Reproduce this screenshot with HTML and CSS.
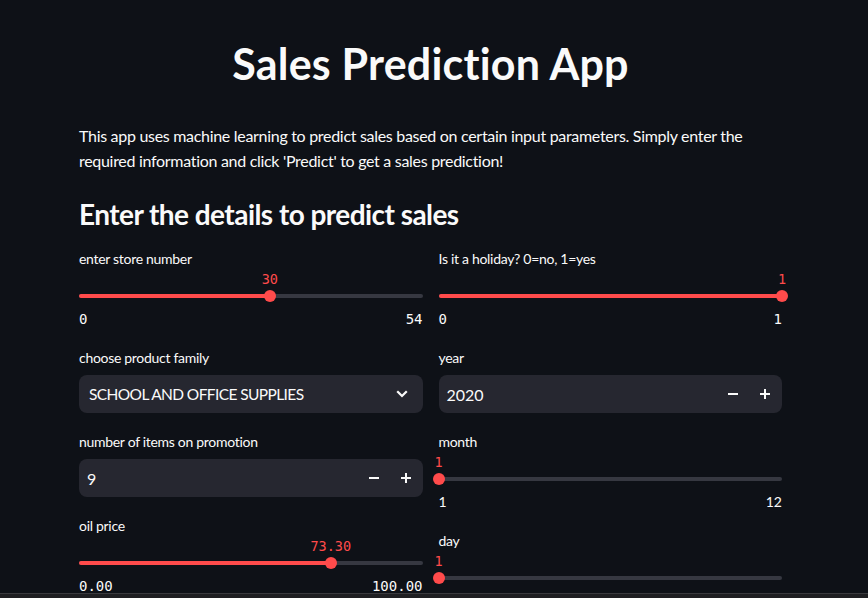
FILE: index.html
```html
<!DOCTYPE html>
<html>
<head>
<meta charset="utf-8">
<link rel="stylesheet" href="styles.css">
</head>
<body>
<div class="page">
  <h1 class="title">Sales Prediction App</h1>
  <p class="intro">This app uses machine learning to predict sales based on certain input parameters. Simply enter the required information and click 'Predict' to get a sales prediction!</p>
  <h2 class="subtitle">Enter the details to predict sales</h2>
  <div class="cols">
    <div class="col">
      <div class="widget slider">
        <div class="label">enter store number</div>
        <div class="track-wrap">
          <div class="track">
            <div class="fill" style="width:55.56%"></div>
            <div class="thumb" style="left:55.56%"><span class="val">30</span></div>
          </div>
        </div>
        <div class="minmax"><span>0</span><span>54</span></div>
      </div>
      <div class="widget">
        <div class="label">choose product family</div>
        <div class="box select">
          <span class="box-text caps">SCHOOL AND OFFICE SUPPLIES</span>
          <svg class="chev" width="14" height="14" viewBox="0 0 14 14"><path d="M3 5 L7 9 L11 5" fill="none" stroke="#fafafa" stroke-width="2.2" stroke-linecap="square"/></svg>
        </div>
      </div>
      <div class="widget">
        <div class="label">number of items on promotion</div>
        <div class="box number">
          <span class="box-text num-text">9</span>
          <span class="step"><svg width="12" height="12" viewBox="0 0 12 12"><path d="M1 6 H11" stroke="#fafafa" stroke-width="2"/></svg></span>
          <span class="step"><svg width="12" height="12" viewBox="0 0 12 12"><path d="M1 6 H11 M6 1 V11" stroke="#fafafa" stroke-width="2"/></svg></span>
        </div>
      </div>
      <div class="widget slider">
        <div class="label">oil price</div>
        <div class="track-wrap">
          <div class="track">
            <div class="fill" style="width:73.3%"></div>
            <div class="thumb" style="left:73.3%"><span class="val">73.30</span></div>
          </div>
        </div>
        <div class="minmax"><span>0.00</span><span>100.00</span></div>
      </div>
    </div>
    <div class="col">
      <div class="widget slider">
        <div class="label">Is it a holiday? 0=no, 1=yes</div>
        <div class="track-wrap">
          <div class="track">
            <div class="fill" style="width:100%"></div>
            <div class="thumb" style="left:100%"><span class="val">1</span></div>
          </div>
        </div>
        <div class="minmax"><span>0</span><span>1</span></div>
      </div>
      <div class="widget">
        <div class="label">year</div>
        <div class="box number">
          <span class="box-text num-text">2020</span>
          <span class="step"><svg width="12" height="12" viewBox="0 0 12 12"><path d="M1 6 H11" stroke="#fafafa" stroke-width="2"/></svg></span>
          <span class="step"><svg width="12" height="12" viewBox="0 0 12 12"><path d="M1 6 H11 M6 1 V11" stroke="#fafafa" stroke-width="2"/></svg></span>
        </div>
      </div>
      <div class="widget slider">
        <div class="label">month</div>
        <div class="track-wrap">
          <div class="track">
            <div class="fill" style="width:0%"></div>
            <div class="thumb" style="left:0%"><span class="val">1</span></div>
          </div>
        </div>
        <div class="minmax sans"><span>1</span><span>12</span></div>
      </div>
      <div class="widget slider day">
        <div class="label">day</div>
        <div class="track-wrap">
          <div class="track">
            <div class="fill" style="width:0%"></div>
            <div class="thumb" style="left:0%"><span class="val">1</span></div>
          </div>
        </div>
      </div>
    </div>
  </div>
</div>
<div class="bottom-bar"></div>
</body>
</html>
```

FILE: styles.css
```css
* { box-sizing: border-box; }
html, body {
  margin: 0;
  padding: 0;
  background: #0e1117;
  color: #fafafa;
  font-family: "Lato", "Noto Sans", sans-serif;
  overflow: hidden;
  height: 598px;
}
.page {
  width: 703px;
  margin-left: 79px;
  padding-top: 40px;
  display: flex;
  flex-direction: column;
}
.title {
  margin: 0;
  font-size: 43px;
  line-height: 48px;
  font-weight: 700;
  text-align: center;
  letter-spacing: 0.2px;
}
.intro {
  margin: 35px 0 0 0;
  font-size: 16px;
  line-height: 25px;
  letter-spacing: -0.3px;
}
.subtitle {
  margin: 24px 0 0 0;
  font-size: 28px;
  line-height: 34px;
  font-weight: 700;
  letter-spacing: -0.55px;
}
.cols {
  margin-top: 18px;
  display: flex;
  gap: 16px;
}
.col {
  flex: 1 1 0;
  display: flex;
  flex-direction: column;
  gap: 19px;
}
.widget {
  display: flex;
  flex-direction: column;
}
.label {
  font-size: 14px;
  line-height: 20px;
  height: 20px;
  letter-spacing: -0.3px;
}
.box {
  margin-top: 7px;
  height: 38px;
  background: #262730;
  border-radius: 8px;
  display: flex;
  align-items: center;
}
.box-text {
  flex: 1;
  font-size: 16px;
  padding-left: 10px;
}
.caps {
  font-size: 15.5px;
  letter-spacing: -0.6px;
}
.num-text { padding-left: 8px; }
.chev { margin-right: 14px; }
.step {
  width: 32px;
  height: 38px;
  display: flex;
  align-items: center;
  justify-content: center;
}
.step:last-child { margin-right: 1px; }
.track-wrap {
  margin-top: 20px;
  height: 14px;
  display: flex;
  align-items: center;
}
.track {
  position: relative;
  width: 100%;
  height: 4px;
  border-radius: 2px;
  background: #363841;
}
.fill {
  height: 4px;
  border-radius: 2px;
  background: #ff4b4b;
}
.thumb {
  position: absolute;
  top: -4px;
  width: 12px;
  height: 12px;
  margin-left: -6px;
  border-radius: 50%;
  background: #ff4b4b;
}
.val {
  position: absolute;
  bottom: 15px;
  left: 50%;
  transform: translateX(-50%);
  font-family: "DejaVu Sans Mono", "Liberation Mono", monospace;
  font-size: 13.5px;
  line-height: 16px;
  color: #ff4b4b;
  white-space: nowrap;
}
.minmax {
  margin-top: 6px;
  height: 20px;
  display: flex;
  justify-content: space-between;
  font-family: "DejaVu Sans Mono", "Liberation Mono", monospace;
  font-size: 14px;
  line-height: 20px;
}
.minmax.sans {
  font-family: "Lato", "Noto Sans", sans-serif;
  font-size: 14px;
}
.bottom-bar {
  position: fixed;
  left: 0;
  right: 0;
  bottom: 0;
  height: 5px;
  background: #1f1f22;
  border-top: 1px solid #3a3a3e;
}
```
